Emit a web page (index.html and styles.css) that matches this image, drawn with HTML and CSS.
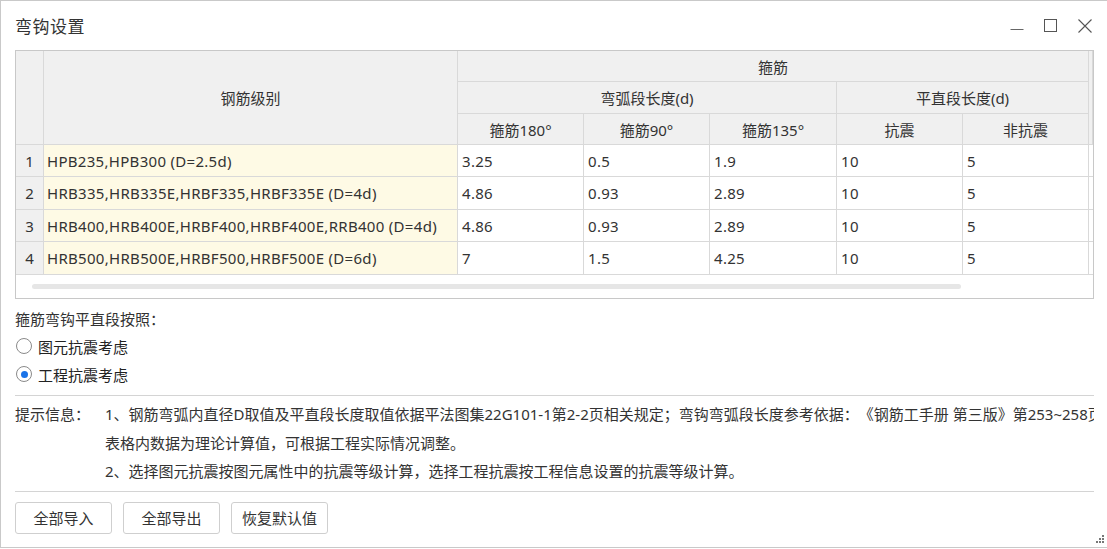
FILE: index.html
```html
<!DOCTYPE html>
<html lang="zh">
<head>
<meta charset="utf-8">
<title>弯钩设置</title>
<link rel="stylesheet" href="styles.css">
</head>
<body>
<div class="dialog">
  <div class="titlebar">
    <div class="title">弯钩设置</div>
    <div class="controls">
      <svg class="ctl" width="14" height="14" viewBox="0 0 14 14"><line x1="0.5" y1="10.5" x2="13.5" y2="10.5" stroke="#666" stroke-width="1"/></svg>
      <svg class="ctl" width="14" height="14" viewBox="0 0 14 14"><rect x="0.5" y="0.5" width="12" height="12" fill="none" stroke="#555" stroke-width="1"/></svg>
      <svg class="ctl" width="14" height="14" viewBox="0 0 14 14"><path d="M0.5 0.5 L13.5 13.5 M13.5 0.5 L0.5 13.5" stroke="#555" stroke-width="1.1" fill="none"/></svg>
    </div>
  </div>

  <div class="content">
    <div class="grid-wrap">
      <div class="grid">
        <div class="c hd rn" style="grid-row: 1 / 4; grid-column: 1;"></div>
        <div class="c hd" style="grid-row: 1 / 4; grid-column: 2;">钢筋级别</div>
        <div class="c hd" style="grid-row: 1; grid-column: 3 / 8;">箍筋</div>
        <div class="c hd" style="grid-row: 1 / 4; grid-column: 8;"></div>
        <div class="c hd" style="grid-row: 2; grid-column: 3 / 6;">弯弧段长度(d)</div>
        <div class="c hd" style="grid-row: 2; grid-column: 6 / 8;">平直段长度(d)</div>
        <div class="c hd">箍筋180°</div>
        <div class="c hd">箍筋90°</div>
        <div class="c hd">箍筋135°</div>
        <div class="c hd">抗震</div>
        <div class="c hd">非抗震</div>

        <div class="c rn">1</div>
        <div class="c name">HPB235,HPB300 (D=2.5d)</div>
        <div class="c v">3.25</div><div class="c v">0.5</div><div class="c v">1.9</div><div class="c v">10</div><div class="c v">5</div><div class="c v"></div>

        <div class="c rn">2</div>
        <div class="c name">HRB335,HRB335E,HRBF335,HRBF335E (D=4d)</div>
        <div class="c v">4.86</div><div class="c v">0.93</div><div class="c v">2.89</div><div class="c v">10</div><div class="c v">5</div><div class="c v"></div>

        <div class="c rn">3</div>
        <div class="c name">HRB400,HRB400E,HRBF400,HRBF400E,RRB400 (D=4d)</div>
        <div class="c v">4.86</div><div class="c v">0.93</div><div class="c v">2.89</div><div class="c v">10</div><div class="c v">5</div><div class="c v"></div>

        <div class="c rn">4</div>
        <div class="c name">HRB500,HRB500E,HRBF500,HRBF500E (D=6d)</div>
        <div class="c v">7</div><div class="c v">1.5</div><div class="c v">4.25</div><div class="c v">10</div><div class="c v">5</div><div class="c v"></div>
      </div>
      <div class="hscroll"><div class="thumb"></div></div>
    </div>

    <div class="options">
      <div class="opt-label">箍筋弯钩平直段按照：</div>
      <label class="radio"><span class="dot"></span>图元抗震考虑</label>
      <label class="radio"><span class="dot on"></span>工程抗震考虑</label>
    </div>

    <div class="sep"></div>

    <div class="tips">
      <div class="tips-label">提示信息：</div>
      <div class="tips-body">
        <div class="tl">1、钢筋弯弧内直径D取值及平直段长度取值依据平法图集22G101-1第2-2页相关规定；弯钩弯弧段长度参考依据：《钢筋工手册 第三版》第253~258页</div>
        <div class="tl">表格内数据为理论计算值，可根据工程实际情况调整。</div>
        <div class="tl">2、选择图元抗震按图元属性中的抗震等级计算，选择工程抗震按工程信息设置的抗震等级计算。</div>
      </div>
    </div>

    <div class="sep sep2"></div>

    <div class="buttons">
      <button class="btn">全部导入</button>
      <button class="btn">全部导出</button>
      <button class="btn">恢复默认值</button>
    </div>
  </div>
  <div class="grip">
    <i style="grid-area: 1 / 3;"></i>
    <i style="grid-area: 2 / 2;"></i><i style="grid-area: 2 / 3;"></i>
    <i style="grid-area: 3 / 1;"></i><i style="grid-area: 3 / 2;"></i><i style="grid-area: 3 / 3;"></i>
  </div>
</div>
</body>
</html>
```

FILE: styles.css
```css
* { box-sizing: border-box; }
html, body { margin: 0; padding: 0; background: #fff; }
body {
  font-family: "Noto Sans", "Noto Sans CJK SC", sans-serif;
  font-size: 15px;
  color: #333;
  text-spacing-trim: space-all;
}
.dialog {
  position: relative;
  width: 1107px;
  height: 548px;
  border: 1px solid #c9c9c9;
  border-right: none;
  background: #fff;
  display: flex;
  flex-direction: column;
}
.titlebar {
  height: 49px;
  display: flex;
  align-items: center;
  justify-content: space-between;
  padding-left: 14px;
  padding-right: 15px;
}
.title {
  font-family: "Noto Sans CJK SC", sans-serif;
  font-size: 17px;
  color: #333;
  letter-spacing: 0.5px;
}
.controls {
  display: flex;
  gap: 20px;
  align-items: center;
}
.ctl { display: block; }
.content {
  padding: 0 13px 0 14px;
}
.grid-wrap {
  width: 1079px;
  height: 249px;
  border: 1px solid #c8c8c8;
  overflow: hidden;
  background: #fff;
}
.grid {
  display: grid;
  grid-template-columns: 28px 414px 126px 126px 127px 126px 126px 4px;
  grid-template-rows: 31px 32px 31px 32px 33px 32px 33px;
}
.c {
  border-right: 1px solid #d9d9d9;
  border-bottom: 1px solid #d9d9d9;
  display: flex;
  align-items: center;
  white-space: nowrap;
  overflow: hidden;
}
.hd {
  background: #f0f0f0;
  justify-content: center;
  color: #333;
}
.rn {
  background: #f0f0f0;
  justify-content: center;
  color: #333;
}
.name {
  background: #fefae5;
  padding-left: 3px;
  letter-spacing: 0.3px;
}
.v {
  padding-left: 4px;
  letter-spacing: 0.3px;
}
.hscroll {
  height: 23px;
  padding: 9px 0 0 16px;
}
.thumb {
  width: 929px;
  height: 5px;
  border-radius: 3px;
  background: #e6e6e6;
}
.options {
  margin-top: 5px;
}
.opt-label, .radio {
  height: 28px;
  display: flex;
  align-items: center;
}
.radio { gap: 6px; padding-left: 1px; color: #222; }
.dot {
  width: 16px;
  height: 16px;
  border: 1px solid #8a8a8a;
  border-radius: 50%;
  background: #fff;
  display: flex;
  align-items: center;
  justify-content: center;
}
.dot.on::after {
  content: "";
  width: 7px;
  height: 7px;
  border-radius: 50%;
  background: #1a73e8;
}
.sep {
  margin-top: 7px;
  width: 1079px;
  height: 1px;
  background: #d4d4d4;
}
.tips {
  display: flex;
  width: 1079px;
  padding-top: 4px;
}
.tips-label { width: 90px; line-height: 28.5px; flex: none; }
.tips-body { flex: 1; overflow: hidden; }
.tl { line-height: 28.5px; white-space: nowrap; }
.sep2 { margin-top: 5px; }
.buttons {
  display: flex;
  gap: 11px;
  margin-top: 10px;
}
.btn {
  width: 97px;
  height: 32px;
  border: 1px solid #cfcfcf;
  border-radius: 3px;
  background: #fff;
  font-family: "Noto Sans CJK SC", sans-serif;
  font-size: 15px;
  color: #333;
  padding: 0;
}
.grip {
  position: absolute;
  right: 3px;
  bottom: 4px;
  display: grid;
  grid-template-columns: repeat(3, 2px);
  grid-template-rows: repeat(3, 2px);
  gap: 1px;
}
.grip i { display: block; width: 2px; height: 2px; background: #777; }
```
